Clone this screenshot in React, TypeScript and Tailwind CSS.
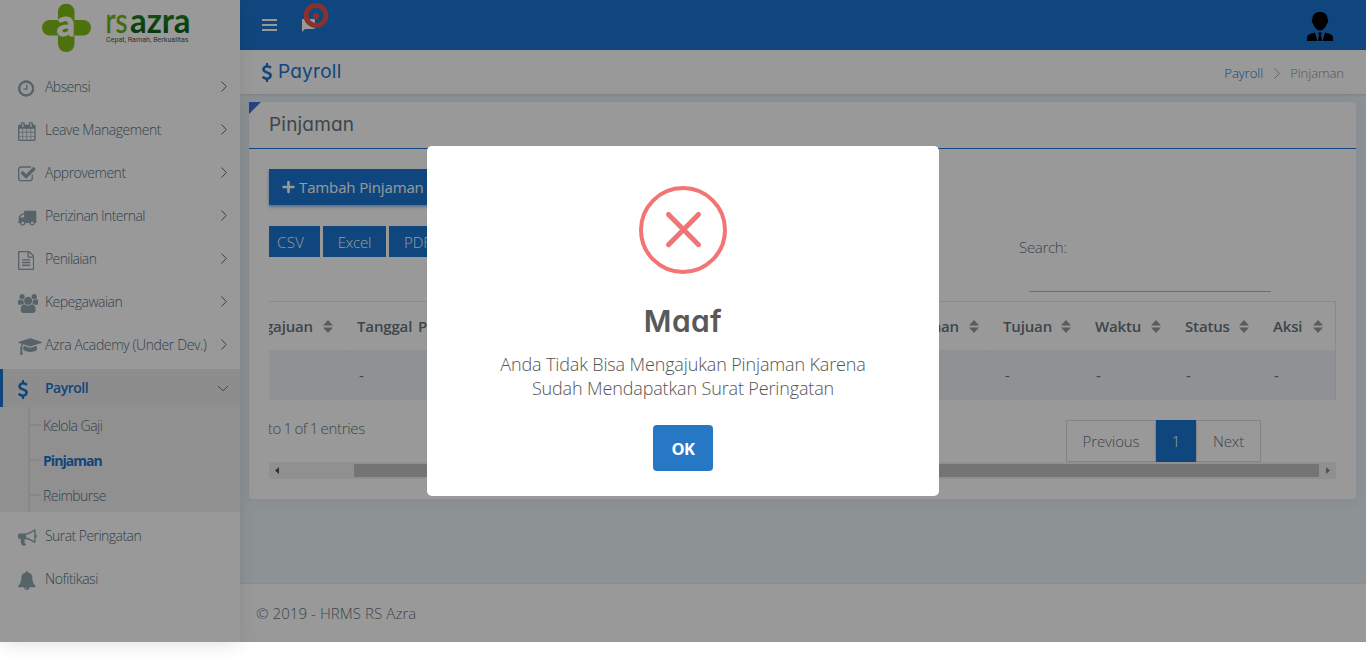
import React from "react";
import { FaPlus } from "react-icons/fa";

const paths = {
  clock:
    "M1024 544v448q0 14-9 23t-23 9h-320q-14 0-23-9t-9-23v-64q0-14 9-23t23-9h224v-352q0-14 9-23t23-9h64q14 0 23 9t9 23zm416 352q0-148-73-273t-198-198-273-73-273 73-198 198-73 273 73 273 198 198 273 73 273-73 198-198 73-273zm224 0q0 209-103 385.5t-279.5 279.5-385.5 103-385.5-103-279.5-279.5-103-385.5 103-385.5 279.5-279.5 385.5-103 385.5 103 279.5 279.5 103 385.5z",
  calendar:
    "M192 1664h288v-288h-288v288zm352 0h320v-288h-320v288zm-352-352h288v-320h-288v320zm352 0h320v-320h-320v320zm-352-384h288v-288h-288v288zm736 736h320v-288h-320v288zm-384-736h320v-288h-320v288zm768 736h288v-288h-288v288zm-384-352h320v-320h-320v320zm-352-864v-288q0-13-9.5-22.5t-22.5-9.5h-64q-13 0-22.5 9.5t-9.5 22.5v288q0 13 9.5 22.5t22.5 9.5h64q13 0 22.5-9.5t9.5-22.5zm736 864h288v-320h-288v320zm-384-384h320v-288h-320v288zm384 0h288v-288h-288v288zm32-480v-288q0-13-9.5-22.5t-22.5-9.5h-64q-13 0-22.5 9.5t-9.5 22.5v288q0 13 9.5 22.5t22.5 9.5h64q13 0 22.5-9.5t9.5-22.5zm384-64v1280q0 52-38 90t-90 38h-1408q-52 0-90-38t-38-90v-1280q0-52 38-90t90-38h128v-96q0-66 47-113t113-47h64q66 0 113 47t47 113v96h384v-96q0-66 47-113t113-47h64q66 0 113 47t47 113v96h128q52 0 90 38t38 90z",
  check:
    "M1472 930v318q0 119-84.5 203.5t-203.5 84.5h-832q-119 0-203.5-84.5t-84.5-203.5v-832q0-119 84.5-203.5t203.5-84.5h832q63 0 117 25 15 7 18 23 3 17-9 29l-49 49q-10 10-23 10-3 0-9-2-23-6-45-6h-832q-66 0-113 47t-47 113v832q0 66 47 113t113 47h832q66 0 113-47t47-113v-254q0-13 9-22l64-64q10-10 23-10 6 0 12 3 20 8 20 29zm231-489l-814 814q-24 24-57 24t-57-24l-430-430q-24-24-24-57t24-57l110-110q24-24 57-24t57 24l263 263 647-647q24-24 57-24t57 24l110 110q24 24 24 57t-24 57z",
  truck:
    "M640 1408q0-52-38-90t-90-38-90 38-38 90 38 90 90 38 90-38 38-90zm-384-512h384v-256h-158q-13 0-22 9l-195 195q-9 9-9 22v30zm1280 512q0-52-38-90t-90-38-90 38-38 90 38 90 90 38 90-38 38-90zm256-1088v1024q0 15-4 26.5t-13.5 18.5-16.5 11.5-23.5 6-22.5 2-25.5 0-22.5-.5q0 106-75 181t-181 75-181-75-75-181h-384q0 106-75 181t-181 75-181-75-75-181h-64q-3 0-22.5.5t-25.5 0-22.5-2-23.5-6-16.5-11.5-13.5-18.5-4-26.5q0-26 19-45t45-19v-320q0-8-.5-35t0-38 2.5-34.5 6.5-37 14-30.5 22.5-30l198-198q19-19 50.5-32t58.5-13h160v-192q0-26 19-45t45-19h1024q26 0 45 19t19 45z",
  file:
    "M1596 380q28 28 48 76t20 88v1152q0 40-28 68t-68 28h-1344q-40 0-68-28t-28-68v-1600q0-40 28-68t68-28h896q40 0 88 20t76 48zm-444-244v376h376q-10-29-22-41l-313-313q-12-12-41-22zm384 1528v-1024h-416q-40 0-68-28t-28-68v-416h-768v1536h1280zm-1024-864q0-14 9-23t23-9h704q14 0 23 9t9 23v64q0 14-9 23t-23 9h-704q-14 0-23-9t-9-23v-64zm736 224q14 0 23 9t9 23v64q0 14-9 23t-23 9h-704q-14 0-23-9t-9-23v-64q0-14 9-23t23-9h704zm0 256q14 0 23 9t9 23v64q0 14-9 23t-23 9h-704q-14 0-23-9t-9-23v-64q0-14 9-23t23-9h704z",
  users:
    "M657 896q-162 5-265 128h-134q-82 0-138-40.5t-56-118.5q0-353 124-353 6 0 43.5 21t97.5 42.5 119 21.5q67 0 133-23-5 37-5 66 0 159 81 289zm1071 637q0 120-73 189.5t-194 69.5h-874q-121 0-194-69.5t-73-189.5q0-53 3.5-103.5t14-109 26.5-108.5 43-97.5 62-81 85.5-53.5 111.5-20q10 0 43 21.5t73 48 107 48 135 21.5 135-21.5 107-48 73-48 43-21.5q61 0 111.5 20t85.5 53.5 62 81 43 97.5 26.5 108.5 14 109 3.5 103.5zm-1024-1277q0 106-75 181t-181 75-181-75-75-181 75-181 181-75 181 75 75 181zm704 384q0 159-112.5 271.5t-271.5 112.5-271.5-112.5-112.5-271.5 112.5-271.5 271.5-112.5 271.5 112.5 112.5 271.5zm576 225q0 78-56 118.5t-138 40.5h-134q-103-123-265-128 81-130 81-289 0-29-5-66 66 23 133 23 59 0 119-21.5t97.5-42.5 43.5-21q124 0 124 353zm-128-609q0 106-75 181t-181 75-181-75-75-181 75-181 181-75 181 75 75 181z",
  cap:
    "M1774 836l18 316q4 69-82 128t-235 93.5-323 34.5-323-34.5-235-93.5-82-128l18-316 574 181q22 7 48 7t48-7zm530-324q0 23-22 31l-1120 352q-4 1-10 1t-10-1l-652-206q-43 34-71 111.5t-34 178.5q63 36 63 109 0 69-58 107l58 433q2 14-8 25-9 11-24 11h-192q-15 0-24-11-10-11-8-25l58-433q-58-38-58-107 0-73 65-111 11-207 98-330l-333-104q-22-8-22-31t22-31l1120-352q4-1 10-1t10 1l1120 352q22 8 22 31z",
  dollar:
    "M1362 1185q0 153-99.5 263.5t-258.5 136.5v175q0 14-9 23t-23 9h-135q-13 0-22.5-9.5t-9.5-22.5v-175q-66-9-127.5-31t-101.5-44.5-74-48-46.5-37.5-17.5-18q-17-21-2-41l103-135q7-10 23-12 15-2 24 9l2 2q113 99 243 125 37 8 74 8 81 0 142.5-43t61.5-122q0-28-15-53t-33.5-42-58.5-37.5-66-32-80-32.5q-39-16-61.5-25t-61.5-26.5-62.5-31-56.5-35.5-53.5-42.5-43.5-49-35.5-58-21-66.5-8.5-78q0-138 98-242t255-134v-180q0-13 9.5-22.5t22.5-9.5h135q14 0 23 9t9 23v176q57 6 110.5 23t87 33.5 63.5 37.5 39 29 15 14q17 18 5 38l-81 146q-8 15-23 16-14 3-27-7-3-3-14.5-12t-39-26.5-58.5-32-74.5-26-85.5-11.5q-95 0-155 43t-60 111q0 26 8.5 48t29.5 41.5 39.5 33 56 31 60.5 27 70 27.5q53 20 81 31.5t76 35 75.5 42.5 62 50 53 63.5 31.5 76.5 13 94z",
  horn:
    "M1664 640q53 0 90.5 37.5t37.5 90.5-37.5 90.5-90.5 37.5v384q0 52-38 90t-90 38q-417-347-812-380-58 19-91 66t-31 100.5 40 92.5q-20 33-23 65.5t6 58 33.5 55 48 50 61.5 50.5q-29 58-111.5 83t-168.5 11.5-132-55.5q-7-23-29.5-87.5t-32-94.5-23-89-15-101 3.5-98.5 22-110.5h-122q-66 0-113-47t-47-113v-192q0-66 47-113t113-47h480q435 0 896-384 52 0 90 38t38 90v384zm-128 604v-954q-394 302-768 343v270q377 42 768 341z",
  bell:
    "M912 1696q0-16-16-16-59 0-101.5-42.5t-42.5-101.5q0-16-16-16t-16 16q0 73 51.5 124.5t124.5 51.5q16 0 16-16zm816-288q0 52-38 90t-90 38h-448q0 106-75 181t-181 75-181-75-75-181h-448q-52 0-90-38t-38-90q50-42 91-88t85-119.5 74.5-158.5 50-206 19.5-260q0-152 117-282.5t307-158.5q-8-19-8-39 0-40 28-68t68-28 68 28 28 68q0 20-8 39 190 28 307 158.5t117 282.5q0 139 19.5 260t50 206 74.5 158.5 85 119.5 91 88z",
};

type IconName = keyof typeof paths;

// viewBox x offset and width of each glyph
const boxes: Record<IconName, [number, number]> = {
  clock: [128, 1536],
  calendar: [64, 1664],
  check: [64, 1664],
  truck: [64, 1792],
  file: [128, 1536],
  users: [64, 1920],
  cap: [0, 2304],
  dollar: [430, 940],
  horn: [0, 1792],
  bell: [64, 1664],
};

function Icon({ name, className = "" }: { name: IconName; className?: string }) {
  const [x, w] = boxes[name];
  return (
    <svg viewBox={`${x} 0 ${w} 1792`} className={`w-auto shrink-0 ${className}`} fill="currentColor">
      <path d={paths[name]} />
    </svg>
  );
}

function Chevron({ className = "" }: { className?: string }) {
  return (
    <svg viewBox="0 0 6 11" className={`h-[11px] w-[6px] shrink-0 ${className}`} fill="none" stroke="currentColor" strokeWidth="1">
      <path d="M.5.5 5.3 5.5.5 10.5" />
    </svg>
  );
}

function Logo() {
  return (
    <div className="h-[63px] shrink-0 pl-[42px] pt-[3px]">
      <svg viewBox="0 0 150 49" className="h-[49px] w-[150px] overflow-visible">
        <defs>
          <linearGradient id="leaf" x1="0" y1="0" x2="0" y2="1">
            <stop offset="0" stopColor="#86c81e" />
            <stop offset="1" stopColor="#5ea814" />
          </linearGradient>
          <linearGradient id="word" x1="0" y1="0" x2="0" y2="1">
            <stop offset="0.2" stopColor="#2a8f2a" />
            <stop offset="0.8" stopColor="#0a6414" />
          </linearGradient>
        </defs>
        <g fill="#82bc1c">
          <rect x="16" y="0.7" width="16.500" height="48.300" rx="8" />
          <rect x="0" y="17" width="49" height="15.500" rx="7.700" />
        </g>
        <text x="24" y="32.700" fontSize="36" textAnchor="middle" fontFamily="Lato, sans-serif" fontWeight="700" fill="#fff" stroke="#fff" strokeWidth="1">a</text>
        <text x="63.500" y="29.700" fontSize="34" textLength="22" lengthAdjust="spacingAndGlyphs" fontFamily="Lato, sans-serif" fill="url(#leaf)" stroke="#6cb418" strokeWidth="0.400">rs</text>
        <text x="88" y="29.700" fontSize="34" textLength="60.500" lengthAdjust="spacingAndGlyphs" fontFamily="Lato, sans-serif" fontWeight="700" fill="url(#word)">azra</text>
        <text x="64" y="39.300" fontSize="7" textLength="82.500" lengthAdjust="spacingAndGlyphs" fontFamily="Roboto, sans-serif" fill="#555">Cepat, Ramah, Berkualitas</text>
      </svg>
    </div>
  );
}

function MenuItem({ icon, label, tracking = "", arrow = true }: { icon: IconName; label: string; tracking?: string; arrow?: boolean }) {
  return (
    <li className="mb-[5px] flex h-[38px] items-center pl-[18px] pr-[13px] text-[#55707d]">
      <span className="flex w-[27px] shrink-0 items-center pt-[3px] text-[#8fa5b0]">
        <Icon name={icon} className="h-[19px]" />
      </span>
      <span className={`flex-1 whitespace-nowrap pb-px text-[14px] font-light ${tracking}`}>{label}</span>
      {arrow && <Chevron className="mb-[2px]" />}
    </li>
  );
}

function SubItem({ label, active = false }: { label: string; active?: boolean }) {
  return (
    <li className={`flex h-[35px] items-center border-l-2 border-[#e2e2e2] ${active ? "font-bold tracking-[-0.950px] text-[#1976d2]" : "tracking-[-0.550px]"}`}>
      <span className="mr-[2px] h-[2px] w-[11px] bg-[#e2e2e2]" />
      <span className="pt-px">{label}</span>
    </li>
  );
}

function Sidebar() {
  return (
    <aside className="relative z-10 flex h-[642px] w-[240px] shrink-0 flex-col bg-white shadow-[0_4px_18px_-2px_rgba(0,0,0,0.12)]">
      <Logo />
      <ul className="flex flex-col pt-[5px]">
        <MenuItem icon="clock" label="Absensi" tracking="tracking-[-0.55px]" />
        <MenuItem icon="calendar" label="Leave Management" tracking="tracking-[-0.45px]" />
        <MenuItem icon="check" label="Approvement" tracking="tracking-[-0.48px]" />
        <MenuItem icon="truck" label="Perizinan Internal" tracking="tracking-[-0.57px]" />
        <MenuItem icon="file" label="Penilaian" tracking="tracking-[-0.6px]" />
        <MenuItem icon="users" label="Kepegawaian" tracking="tracking-[-0.52px]" />
        <MenuItem icon="cap" label="Azra Academy (Under Dev.)" tracking="tracking-[-0.37px]" />
      </ul>
      <div className="flex h-[38px] items-center border-l-[3px] border-[#1976d2] bg-[#ebebeb] pl-[15px] pr-[14px] text-[#1976d2]">
        <span className="flex w-[27px] items-center pt-[2px]"><Icon name="dollar" className="h-[19px]" /></span>
        <span className="flex-1 pb-px text-[14px] font-semibold tracking-[-0.5px]">Payroll</span>
        <Chevron className="rotate-90 text-[#607d8b]" />
      </div>
      <ul className="flex flex-col bg-[#f0f0f0] pl-[28px] text-[14px] font-light text-[#55707d]">
        <SubItem label="Kelola Gaji" />
        <SubItem label="Pinjaman" active />
        <SubItem label="Reimburse" />
      </ul>
      <ul className="flex flex-col pt-[5px]">
        <MenuItem icon="horn" label="Surat Peringatan" arrow={false} tracking="tracking-[-0.55px]" />
        <MenuItem icon="bell" label="Nofitikasi" arrow={false} tracking="tracking-[-0.45px]" />
      </ul>
    </aside>
  );
}

function Navbar() {
  return (
    <header className="flex h-[50px] shrink-0 items-center justify-between bg-[#1976d2] pl-[22px] pr-[33px]">
      <div className="flex items-center">
        <div className="flex w-[15px] flex-col gap-[3px]">
          <span className="h-[2px] bg-white" />
          <span className="h-[2px] bg-white" />
          <span className="h-[2px] bg-white" />
        </div>
        <div className="relative ml-[25px] h-[13px] w-[13px]">
          <svg viewBox="0 0 13 13" className="h-[13px] w-[13px]" fill="#fff">
            <path d="M1 0h11q1 0 1 1v8q0 1-1 1H3l-3 3V1q0-1 1-1z" />
          </svg>
          <svg viewBox="0 0 24 25" className="absolute -top-[16px] left-[2px] h-[25px] w-[24px]">
            <circle cx="12" cy="12.5" r="10" fill="none" stroke="#e8504a" strokeWidth="5" />
            <circle cx="12" cy="13" r="3" fill="#e8504a" />
          </svg>
        </div>
      </div>
      <svg viewBox="0 0 26 29" className="mt-[2px] h-[29px] w-[26px]" fill="#000">
        <path d="M13 0c4.5 0 7.5 2.6 7.5 6.5 0 .8 1.200 1.500.6 3.500-.3 1-1 1.300-1.300 2C18.800 15.500 16 18.500 13 18.500S7.200 15.500 6.200 12C5.900 11.300 5.200 11 4.900 10 4.300 8 5.500 7.300 5.500 6.500 5.500 2.600 8.500 0 13 0z" />
        <path d="M8 20.500 10.300 29H0V26q0-3 3-4zM18 20.500 15.700 29H26V26q0-3-3-4zM11 20.500h4l-1 2.500 1.200 6h-4.400L12 23z" />
      </svg>
    </header>
  );
}

function Sort() {
  return (
    <svg viewBox="0 0 10 13" className="h-[13px] w-[10px] shrink-0" fill="#999">
      <path d="M5 0 10 5.500H0zM5 13 10 7.500H0z" />
    </svg>
  );
}

const columns = [
  { label: "Tanggal Pengajuan", width: "w-[76px]", value: "" },
  { label: "Tanggal Pinjaman", width: "w-[181px]", value: "-" },
  { label: "Jumlah Pinjaman", width: "w-[465px]", value: "" },
  { label: "Tujuan", width: "w-[92px]", value: "-" },
  { label: "Waktu", width: "w-[90px]", value: "-" },
  { label: "Status", width: "w-[88px]", value: "-" },
  { label: "Aksi", width: "w-[74px]", value: "-" },
];

function LoanTable() {
  return (
    <div className="flex flex-col border-t border-r border-[#e6e6e6] text-[15px] text-[#67757c]">
      <div className="flex h-[48px]">
        {columns.map((c, i) => (
          <div
            key={c.label}
            className={`flex shrink-0 items-center overflow-hidden pl-3 pr-[12px] font-semibold tracking-[-0.15px] [word-spacing:2px] whitespace-nowrap ${c.width} ${i === 0 || i === 2 ? "justify-end gap-[10px]" : "justify-between"}`}
          >
            <span>{c.label}</span>
            <Sort />
          </div>
        ))}
      </div>
      <div className="flex h-[50px] bg-[#f1f2f8]">
        {columns.map((c, i) => (
          <div key={c.label} className={`flex shrink-0 items-center pl-[13px] ${i === 1 || i === 3 ? "border-l border-[#edeff3]" : ""} ${c.width}`}>
            {c.value}
          </div>
        ))}
      </div>
    </div>
  );
}

function Card() {
  return (
    <section className="relative ml-[9px] mr-[10px] mt-[8px] flex h-[397px] w-[1107px] shrink-0 flex-col rounded bg-white shadow-[0_1px_15px_1px_rgba(62,57,107,0.07)]">
      <svg viewBox="0 0 12 12" className="absolute left-0 top-0 h-3 w-3" fill="#4070d8"><path d="M0 0h12L0 12z" /></svg>
      <h2 className="flex h-[47px] shrink-0 items-center border-b border-[#1976d2] pl-[20px] font-['Inter'] text-[19px] leading-[28px] tracking-[0.2px] text-[#67757c] [font-feature-settings:'cv11']">Pinjaman</h2>
      <div className="flex flex-col px-[20px] pt-[20px]">
        <div className="flex h-[36px] w-[170px] items-center gap-[4px] bg-[#1976d2] pl-[13px] text-[15px] whitespace-nowrap text-white shadow-[0_2px_3px_rgba(25,118,210,0.5)]">
          <FaPlus className="h-[14px] w-[13px]" />
          <span className="tracking-[-0.13px]">Tambah Pinjaman</span>
        </div>
        <div className="flex h-[75px] items-start pt-[21px] text-[15px] font-light">
          <div className="flex gap-[3px] text-white">
            <span className="flex h-[31px] w-[51px] items-center bg-[#1976d2] pt-px pl-[8px] tracking-[0.4px]">CSV</span>
            <span className="flex h-[31px] w-[63px] items-center justify-center bg-[#1976d2] pt-px tracking-[-0.2px]">Excel</span>
            <span className="flex h-[31px] w-[60px] items-center bg-[#1976d2] pt-px pl-[15px]">PDF</span>
          </div>
          <div className="ml-auto mr-[65px] flex h-[66px] w-[252px] flex-col text-[#67757c]">
            <span className="h-[23px] pt-[10px] leading-[23px] tracking-[-0.3px]">Search:</span>
            <span className="ml-[10px] mt-auto h-px w-[242px] shrink-0 bg-[#b4b4b4]" />
          </div>
        </div>
        <div className="mt-[21px]">
          <LoanTable />
        </div>
        <div className="flex h-[62px] items-end justify-between text-[15px] font-light text-[#67757c]">
          <div className="flex w-[96px] justify-end self-start overflow-hidden whitespace-nowrap pt-[17px] tracking-[-0.3px] [word-spacing:-1px]">Showing 1 to 1 of 1 entries</div>
          <div className="mr-[75px] flex h-[42px]">
            <span className="flex w-[90px] items-center justify-center border border-[#ddd] tracking-[-0.1px]">Previous</span>
            <span className="flex w-[40px] items-center justify-center bg-[#1976d2] text-white">1</span>
            <span className="flex w-[65px] items-center justify-center border border-[#ddd] tracking-[-0.1px]">Next</span>
          </div>
        </div>
        <div className="flex h-[17px] items-center bg-[#f1f1f1]">
          <svg viewBox="0 0 4 7" className="ml-[6px] h-[7px] w-[4px]" fill="#505050"><path d="M4 0v7L0 3.500z" /></svg>
          <span className="ml-[75px] h-[13px] w-[965px] bg-[#c1c1c1]" />
          <svg viewBox="0 0 4 7" className="ml-[7px] h-[7px] w-[4px]" fill="#8a8a8a"><path d="M0 0v7l4-3.500z" /></svg>
        </div>
      </div>
    </section>
  );
}

function Dialog() {
  return (
    <div className="absolute inset-0 flex justify-center pt-[146px]">
      <div className="flex h-[350px] w-[512px] flex-col items-center rounded-[5px] bg-white pt-[40px]">
        <svg viewBox="0 0 88 88" className="h-[88px] w-[88px]" fill="none" stroke="#f27474">
          <circle cx="44" cy="44" r="42" strokeWidth="4" />
          <path d="M29.500 28.500 59.500 58.700M59.500 28.500 29.500 58.700" strokeWidth="5" strokeLinecap="round" />
        </svg>
        <h1 className="mt-[25px] font-['Inter'] text-[30px] font-semibold leading-[45px] tracking-[0.4px] text-[#595959] [font-feature-settings:'cv11']">Maaf</h1>
        <p className="mt-[8px] text-center text-[18px] font-light leading-[24px] tracking-[-0.14px] text-[#545454]">
          Anda Tidak Bisa Mengajukan Pinjaman Karena
          <br />
          Sudah Mendapatkan Surat Peringatan
        </p>
        <button className="mt-[25px] h-[46px] w-[60px] rounded-[4px] bg-[#2778c4] pt-[2px] text-[16.500px] font-bold tracking-[-0.5px] text-white">OK</button>
      </div>
    </div>
  );
}

export default function App() {
  return (
    <div className="h-[663px] w-[1366px] overflow-hidden bg-white font-['Open_Sans',sans-serif]">
      <div className="relative flex h-[642px]">
        <Sidebar />
        <main className="flex h-[642px] flex-1 flex-col bg-[#ebf3f7]">
          <Navbar />
          <div className="flex h-[44px] shrink-0 items-center justify-between bg-white pl-[22px] pr-[22px] shadow-[0_1px_3px_rgba(0,0,0,0.12)]">
            <div className="flex items-center gap-[6px] font-['Inter'] text-[19px] tracking-[0.25px] text-[#1976d2] [font-feature-settings:'cv11']">
              <Icon name="dollar" className="h-[19px]" />
              <span>Payroll</span>
            </div>
            <div className="flex items-center pt-[3px] text-[13px] font-light tracking-[-0.03px]">
              <span className="text-[#1976d2]">Payroll</span>
              <Chevron className="ml-[11px] mr-[10px] text-[#a0a8ac]" />
              <span className="text-[#85929a]">Pinjaman</span>
            </div>
          </div>
          <Card />
          <footer className="mt-auto flex h-[59px] shrink-0 items-center border-t border-[#e6e9eb] bg-white pl-[16px] text-[15px] font-light tracking-[0.08px] text-[#67757c]">© 2019 - HRMS RS Azra</footer>
        </main>
        <div className="absolute inset-0 z-20 bg-black/40">
          <Dialog />
        </div>
      </div>
    </div>
  );
}
